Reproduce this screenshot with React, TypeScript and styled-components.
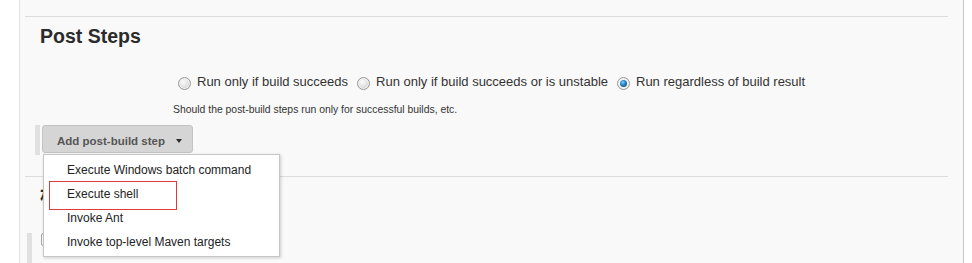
import React from "react";
import styled, { createGlobalStyle, css } from "styled-components";

const GlobalStyle = createGlobalStyle`
  html, body { margin: 0; padding: 0; background: #ffffff; }
  body {
    font-family: "Liberation Sans", Arial, "Noto Sans CJK SC", sans-serif;
    color: #333333;
  }
`;

const Page = styled.div`
  display: flex;
  height: 263px;
  overflow: hidden;
`;

const Gutter = styled.div`
  width: 19px;
  flex: none;
`;

const Panel = styled.div`
  width: 945px;
  flex: none;
  box-sizing: border-box;
  background: #f9f9f9;
  border-left: 1px solid #e2e2e2;
  border-right: 1px solid #c6c6c6;
  padding: 16px 15px 0 5px;
`;

const Section = styled.section<{ $bottom?: number }>`
  border-top: 1px solid #dcdcdc;
  padding-bottom: ${(p) => p.$bottom ?? 0}px;
`;

const Heading = styled.h2`
  margin: 0;
  padding: 8px 0 0 15px;
  font-family: "Liberation Sans", Arial, "Noto Sans CJK SC", sans-serif;
  font-size: 19.5px;
  line-height: 22px;
  font-weight: bold;
  color: #2b2b2b;
`;

const FieldGrid = styled.div`
  display: grid;
  grid-template-columns: 148px 1fr;
  margin-top: 27px;
`;

const Options = styled.div`
  grid-column: 2;
  display: flex;
  align-items: flex-start;
  gap: 4px;
  font-size: 13px;
  line-height: 16px;
  color: #333;
`;

const Option = styled.label`
  display: inline-flex;
  align-items: flex-start;
  white-space: nowrap;
`;

const Radio = styled.span<{ $checked?: boolean }>`
  position: relative;
  flex: none;
  width: 13px;
  height: 13px;
  box-sizing: border-box;
  margin: 3px 6px 0 5px;
  border-radius: 50%;
  border: 1px solid #979797;
  background: radial-gradient(circle at 40% 35%, #fbfbfb 0%, #e5e5e5 45%, #c2c2c2 100%);
  box-shadow: inset 0 0 0 1px #f2f2f2;
  ${(p) =>
    p.$checked &&
    css`
      background: radial-gradient(circle at 45% 40%, #ffffff 0%, #eeeeee 60%, #cfcfcf 100%);
      &::after {
        content: "";
        position: absolute;
        left: 2px;
        top: 2px;
        width: 7px;
        height: 7px;
        border-radius: 50%;
        background: radial-gradient(circle at 40% 35%, #7fd0ff 0%, #2a86c8 40%, #0c3f6c 100%);
      }
    `}
`;

const Help = styled.div`
  grid-column: 2;
  margin-top: 13px;
  font-size: 10.4px;
  line-height: 13px;
  color: #333;
`;

const ButtonRow = styled.div`
  display: flex;
  align-items: flex-start;
  gap: 2px;
  margin-top: 9px;
  padding-left: 10px;
`;

const Handle = styled.div<{ $h?: number }>`
  width: 5px;
  height: ${(p) => p.$h ?? 30}px;
  background: #e0e0e0;
  flex: none;
`;

const ButtonWrap = styled.div`
  position: relative;
`;

const DropButton = styled.button`
  display: flex;
  align-items: center;
  justify-content: space-between;
  box-sizing: border-box;
  width: 151px;
  height: 28px;
  margin: 0;
  padding: 4px 10px 0 14px;
  border: 1px solid #c3c3c3;
  border-radius: 3px;
  background: #d5d5d5;
  font-family: "Liberation Sans", Arial, sans-serif;
  font-size: 11.5px;
  font-weight: bold;
  color: #555555;
  line-height: 14px;
`;

const Caret = styled.span`
  width: 0;
  height: 0;
  border-left: 3px solid transparent;
  border-right: 3px solid transparent;
  border-top: 4px solid #2a2a2a;
`;

const Menu = styled.ul`
  position: absolute;
  left: 1px;
  top: 29px;
  z-index: 10;
  box-sizing: border-box;
  width: 237px;
  margin: 0;
  padding: 3px 0 2px;
  list-style: none;
  background: #ffffff;
  border: 1px solid #c6c6c6;
  box-shadow: 1px 1px 3px rgba(0, 0, 0, 0.18);
`;

const MenuItem = styled.li<{ $marked?: boolean }>`
  position: relative;
  height: 24px;
  line-height: 24px;
  padding-left: 23px;
  font-size: 12px;
  color: #222222;
  white-space: nowrap;
  ${(p) =>
    p.$marked &&
    css`
      &::after {
        content: "";
        position: absolute;
        left: 5px;
        top: -1px;
        width: 128px;
        height: 29px;
        box-sizing: border-box;
        border: 1px solid #e03a3a;
      }
    `}
`;

const CheckRow = styled.div`
  display: flex;
  align-items: flex-start;
  margin-top: 26px;
  padding-left: 2px;
`;

const Checkbox = styled.span`
  flex: none;
  width: 13px;
  height: 13px;
  box-sizing: border-box;
  margin: 0 5px 0 9px;
  border: 1px solid #a8a8a8;
  border-radius: 2px;
  background: linear-gradient(#f4f4f4, #ffffff);
`;

const menuItems = [
  "Execute Windows batch command",
  "Execute shell",
  "Invoke Ant",
  "Invoke top-level Maven targets",
];

const runOptions = [
  { label: "Run only if build succeeds", checked: false },
  { label: "Run only if build succeeds or is unstable", checked: false },
  { label: "Run regardless of build result", checked: true },
];

export default function App() {
  return (
    <>
      <GlobalStyle />
      <Page>
        <Gutter />
        <Panel>
          <Section $bottom={21}>
            <Heading>Post Steps</Heading>
            <FieldGrid>
              <Options>
                {runOptions.map((o) => (
                  <Option key={o.label}>
                    <Radio $checked={o.checked} />
                    {o.label}
                  </Option>
                ))}
              </Options>
              <Help>Should the post-build steps run only for successful builds, etc.</Help>
            </FieldGrid>
            <ButtonRow>
              <Handle />
              <ButtonWrap>
                <DropButton type="button">
                  <span>Add post-build step</span>
                  <Caret />
                </DropButton>
                <Menu>
                  {menuItems.map((m) => (
                    <MenuItem key={m} $marked={m === "Execute shell"}>
                      {m}
                    </MenuItem>
                  ))}
                </Menu>
              </ButtonWrap>
            </ButtonRow>
          </Section>
          <Section>
            <Heading>构建设置</Heading>
            <CheckRow>
              <Handle $h={40} />
              <Checkbox />
            </CheckRow>
          </Section>
        </Panel>
      </Page>
    </>
  );
}
